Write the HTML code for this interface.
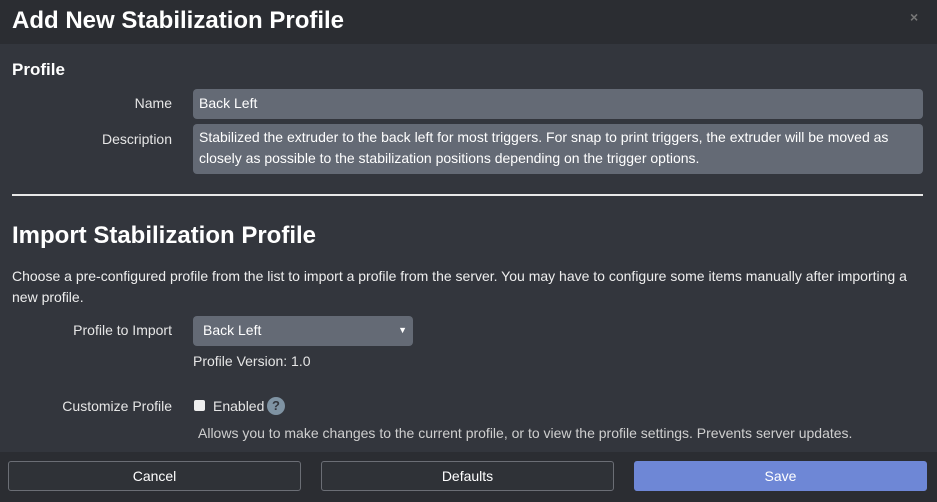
<!DOCTYPE html><html><head><style>
body{margin:0;width:937px;height:502px;overflow:hidden;background:#33363d;font-family:"Liberation Sans",sans-serif;color:#fff;position:relative}
.a{position:absolute}
.hd{left:0;top:0;width:937px;height:44px;background:#2b2d32}
.lbl{font-size:14px;color:#e6e6e6;text-align:right;width:172px;left:0}
.inp{background:#646a75;border-radius:4px;font-size:14px;color:#fff;box-sizing:border-box;padding:0 6px}
.btn{top:461px;height:30px;border-radius:3px;border:1px solid #6b6e75;box-sizing:border-box;font-size:14px;text-align:center;line-height:28px;background:#2f3237}
</style></head><body>
<div class="a hd"></div>
<div class="a" style="left:12px;top:7px;font-size:24px;font-weight:bold">Add New Stabilization Profile</div>
<div class="a" style="left:910px;top:9px;font-size:14px;color:#777;font-weight:bold">×</div>
<div class="a" style="left:12px;top:60px;font-size:17px;font-weight:bold">Profile</div>
<div class="a lbl" style="top:95px">Name</div>
<div class="a inp" style="left:193px;top:89px;width:730px;height:30px;line-height:28px">Back Left</div>
<div class="a lbl" style="top:131px">Description</div>
<div class="a inp" style="left:193px;top:124px;width:730px;height:50px;padding-top:3px;line-height:21px">Stabilized the extruder to the back left for most triggers. For snap to print triggers, the extruder will be moved as closely as possible to the stabilization positions depending on the trigger options.</div>
<div class="a" style="left:12px;top:194px;width:911px;height:2px;background:#e8e8e8"></div>
<div class="a" style="left:12px;top:222px;font-size:24px;font-weight:bold">Import Stabilization Profile</div>
<div class="a" style="left:12px;top:266px;width:910px;font-size:14px;line-height:21px;color:#eee">Choose a pre-configured profile from the list to import a profile from the server. You may have to configure some items manually after importing a new profile.</div>
<div class="a lbl" style="top:322px">Profile to Import</div>
<div class="a inp" style="left:193px;top:316px;width:220px;height:30px;line-height:28px;padding-left:10px">Back Left<span style="position:absolute;right:6px;font-size:9px">▼</span></div>
<div class="a" style="left:193px;top:353px;font-size:14px;color:#e6e6e6">Profile Version: 1.0</div>
<div class="a lbl" style="top:398px">Customize Profile</div>
<div class="a" style="left:194px;top:400px;width:11px;height:11px;background:#eee;border-radius:2px"></div>
<div class="a" style="left:213px;top:398px;font-size:14px;color:#e6e6e6">Enabled</div>
<div class="a" style="left:267px;top:397px;width:18px;height:18px;border-radius:50%;background:#7f93a3;color:#33363d;font-size:13px;font-weight:bold;text-align:center;line-height:18px">?</div>
<div class="a" style="left:198px;top:425px;font-size:14px;color:#cfcfcf">Allows you to make changes to the current profile, or to view the profile settings. Prevents server updates.</div>
<div class="a" style="left:0;top:452px;width:937px;height:50px;background:#2b2d32"></div>
<div class="a btn" style="left:8px;width:293px">Cancel</div>
<div class="a btn" style="left:321px;width:293px">Defaults</div>
<div class="a btn" style="left:634px;width:293px;background:#6e87d6;border-color:#6e87d6">Save</div>
</body></html>
